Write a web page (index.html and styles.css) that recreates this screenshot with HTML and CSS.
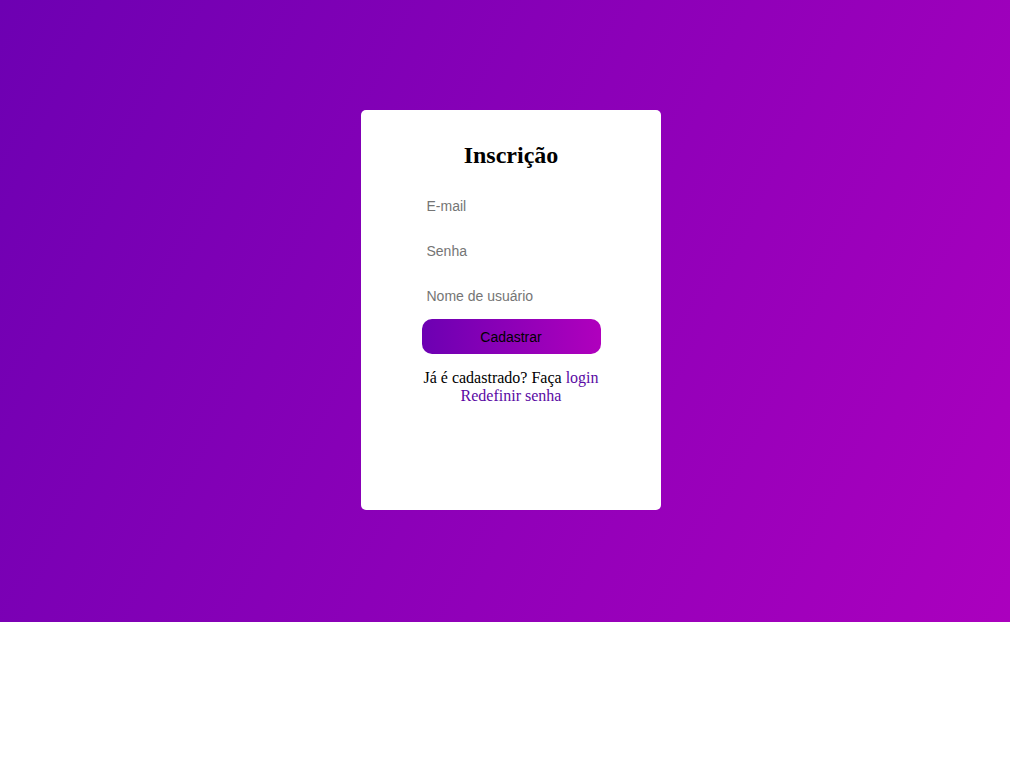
FILE: index.html
```html
<!DOCTYPE html>
<html lang="pt-BR">
<head>
<meta charset="utf-8">
<title>Inscrição</title>
<link rel="stylesheet" href="styles.css">
</head>
<body>
<section class="hero">
  <div class="card">
    <h2 class="title">Inscrição</h2>
    <form class="form">
      <input class="field" type="email" placeholder="E-mail">
      <input class="field" type="password" placeholder="Senha">
      <input class="field" type="text" placeholder="Nome de usuário">
      <button class="btn" type="button">Cadastrar</button>
    </form>
    <p class="links">Já é cadastrado? Faça <a href="#">login</a><br><a href="#">Redefinir senha</a></p>
  </div>
</section>
</body>
</html>
```

FILE: styles.css
```css
html, body {
  margin: 0;
  padding: 0;
  background: #ffffff;
}

.hero {
  box-sizing: border-box;
  width: 1010px;
  height: 622px;
  padding: 110px 0 0 12px;
  display: flex;
  justify-content: center;
  align-items: flex-start;
  background: linear-gradient(115deg, #6d00b2, #ab00be);
}

.card {
  box-sizing: border-box;
  width: 300px;
  height: 400px;
  background: #ffffff;
  border-radius: 5px;
  padding-top: 31px;
  display: flex;
  flex-direction: column;
  align-items: center;
}

.title {
  margin: 0;
  font-family: "Liberation Serif", "Times New Roman", serif;
  font-weight: bold;
  font-size: 24px;
  line-height: 28px;
  color: #000;
}

.form {
  margin-top: 19px;
  width: 179px;
  display: flex;
  flex-direction: column;
  gap: 10px;
}

.field {
  box-sizing: border-box;
  width: 179px;
  height: 35px;
  border: none;
  outline: none;
  padding: 0 5px;
  font-family: "Liberation Sans", Arial, sans-serif;
  font-size: 14px;
  color: #333;
  background: transparent;
}

.field::placeholder {
  color: #757575;
}

.btn {
  margin-top: -4px;
  width: 179px;
  height: 35px;
  border: none;
  border-radius: 10px;
  background: linear-gradient(to right, #6c00b2, #b000bd);
  font-family: "Liberation Sans", Arial, sans-serif;
  font-size: 14px;
  color: #000;
  cursor: pointer;
}

.links {
  margin: 15px 0 0;
  text-align: center;
  font-family: "Liberation Serif", "Times New Roman", serif;
  font-size: 16px;
  line-height: 18px;
  color: #000;
}

.links a {
  color: #5a0aa4;
  text-decoration: none;
}
```
